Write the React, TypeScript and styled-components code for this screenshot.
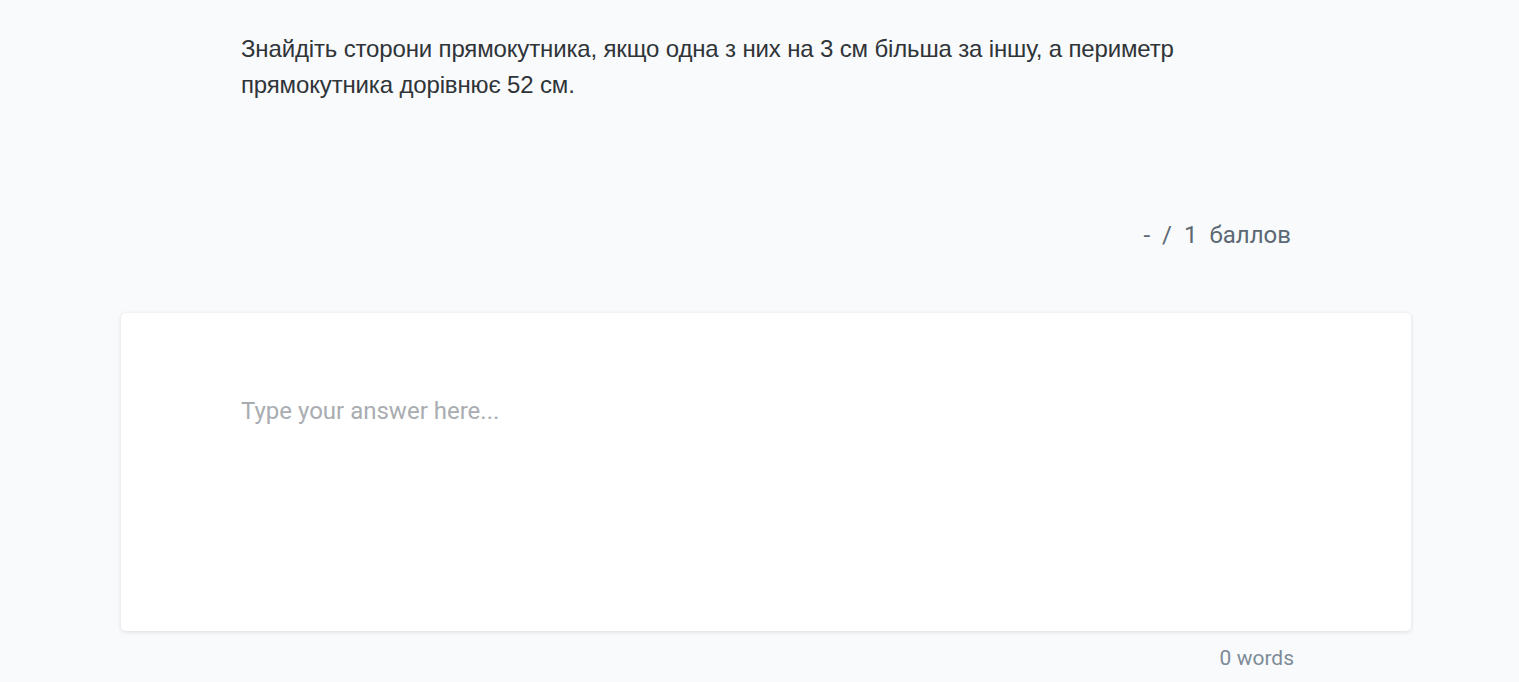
import React, { useState } from "react";
import styled, { createGlobalStyle } from "styled-components";

const GlobalStyle = createGlobalStyle`
  html, body {
    margin: 0;
    padding: 0;
    background: #f9fafc;
  }
`;

const Page = styled.div`
  padding: 0 108px 0 121px;
  box-sizing: border-box;
  width: 1519px;
`;

const Question = styled.p`
  margin: 0 0 0 120px;
  padding-top: 31px;
  width: 1050px;
  font-family: "Liberation Sans", Arial, sans-serif;
  font-size: 24px;
  letter-spacing: -0.15px;
  line-height: 36px;
  color: #2f3438;
`;

const Points = styled.div`
  display: flex;
  justify-content: flex-end;
  gap: 12px;
  margin: 117px 120px 0 0;
  width: 1170px;
  font-family: Roboto, sans-serif;
  font-size: 24px;
  line-height: 30px;
  color: #5c6873;
`;

const Card = styled.div`
  margin-top: 63px;
  width: 1290px;
  height: 318px;
  box-sizing: border-box;
  padding: 83px 120px 0;
  background: #ffffff;
  border-radius: 5px;
  box-shadow: 0 1px 4px rgba(30, 40, 60, 0.14);
`;

const Answer = styled.textarea`
  display: block;
  width: 100%;
  height: 200px;
  border: none;
  outline: none;
  resize: none;
  padding: 0;
  background: transparent;
  font-family: Roboto, sans-serif;
  font-size: 24px;
  line-height: 30px;
  color: #2f3438;

  &::placeholder {
    color: #a9adb1;
  }
`;

const WordCount = styled.div`
  margin-top: 15px;
  width: 1173px;
  text-align: right;
  font-family: Roboto, sans-serif;
  font-size: 21px;
  line-height: 24px;
  color: #7d8b97;
`;

const App = () => {
  const [text, setText] = useState("");
  const words = text.trim() ? text.trim().split(/\s+/).length : 0;

  return (
    <Page>
      <GlobalStyle />
      <Question>
        Знайдіть сторони прямокутника, якщо одна з них на 3 см більша за іншу,
        а периметр прямокутника дорівнює 52 см.
      </Question>
      <Points>
        <span>-</span>
        <span>/</span>
        <span>1</span>
        <span>баллов</span>
      </Points>
      <Card>
        <Answer
          value={text}
          placeholder="Type your answer here..."
          onChange={(e) => setText(e.target.value)}
        />
      </Card>
      <WordCount>{words} words</WordCount>
    </Page>
  );
};

export default App;
